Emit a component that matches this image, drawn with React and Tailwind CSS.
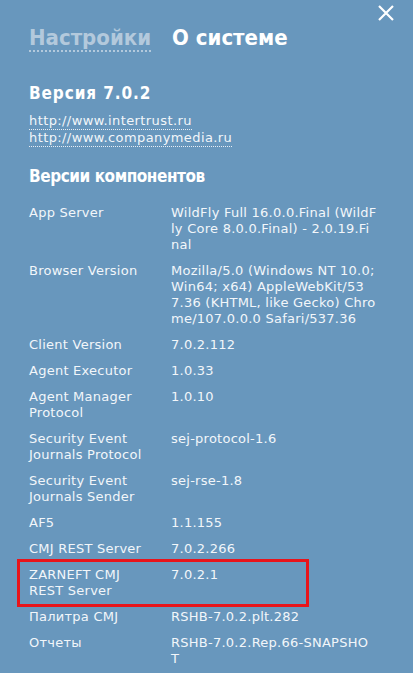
export default function App() {
  const rows = [
    ["App Server", ["WildFly Full 16.0.0.Final (WildF", "ly Core 8.0.0.Final) - 2.0.19.Fi", "nal"]],
    ["Browser Version", ["Mozilla/5.0 (Windows NT 10.0;", "Win64; x64) AppleWebKit/53", "7.36 (KHTML, like Gecko) Chro", "me/107.0.0.0 Safari/537.36"]],
    ["Client Version", ["7.0.2.112"]],
    ["Agent Executor", ["1.0.33"]],
    ["Agent Manager Protocol", ["1.0.10"]],
    ["Security Event Journals Protocol", ["sej-protocol-1.6"]],
    ["Security Event Journals Sender", ["sej-rse-1.8"]],
    ["AF5", ["1.1.155"]],
    ["CMJ REST Server", ["7.0.2.266"]],
    ["ZARNEFT CMJ REST Server", ["7.0.2.1"], true],
    ["Палитра CMJ", ["RSHB-7.0.2.plt.282"]],
    ["Отчеты", ["RSHB-7.0.2.Rep.66-SNAPSHO", "T"]],
  ];
  const cond = { fontFamily: '"DejaVu Sans Condensed", "DejaVu Sans", sans-serif' };
  return (
    <div
      className="relative w-[413px] h-[673px] overflow-hidden bg-[#6897bd] text-[#f2f6fa]"
      style={{ fontFamily: '"DejaVu Sans", Verdana, sans-serif' }}
    >
      <button className="absolute left-[378px] top-[5px] w-[16px] h-[16px]">
        <svg width="16" height="16" viewBox="0 0 16 16">
          <path d="M1 1 L15 15 M15 1 L1 15" stroke="#ffffff" strokeWidth="2.2" />
        </svg>
      </button>

      <div className="pl-[29px] pt-[26px]">
        <div className="flex items-end gap-[21px] text-[22px] font-bold leading-[24px]" style={cond}>
          <span className="text-[#b3c9dc] border-b-2 border-dotted border-[#b3c9dc]">Настройки</span>
          <span className="text-white pb-[2px]">О системе</span>
        </div>

        <div className="mt-[31px] text-[17px] font-bold text-white leading-[20px] tracking-[0.9px]" style={cond}>
          Версия 7.0.2
        </div>
        <div className="mt-[10px] flex flex-col text-[13px] leading-[16px] items-start tracking-[0.4px]">
          <span className="border-b border-dotted border-[#e8eef5]">http://www.intertrust.ru</span>
          <span className="border-b border-dotted border-[#e8eef5]">http://www.companymedia.ru</span>
        </div>

        <div className="mt-[19px] text-[17px] font-bold text-white leading-[20px] tracking-[-0.45px]" style={cond}>
          Версии компонентов
        </div>

        <div className="mt-[14px] flex flex-col text-[13px] leading-[16px] tracking-[0.25px]">
          {rows.map(([k, v, hl]) => (
            <div
              key={k}
              className={
                "flex py-[5px] -ml-[12px] pl-[12px] w-[292px] " +
                (hl ? "outline-[3px] outline-solid outline-[#e8141b] -outline-offset-[3px] pt-[8px] pb-[8px] my-[-3px]" : "")
              }
            >
              <div className="w-[142px] shrink-0 pr-[20px]">{k}</div>
              <div className="flex flex-col whitespace-nowrap">
                {v.map((line, i) => (
                  <span key={i}>{line}</span>
                ))}
              </div>
            </div>
          ))}
        </div>
      </div>
    </div>
  );
}
